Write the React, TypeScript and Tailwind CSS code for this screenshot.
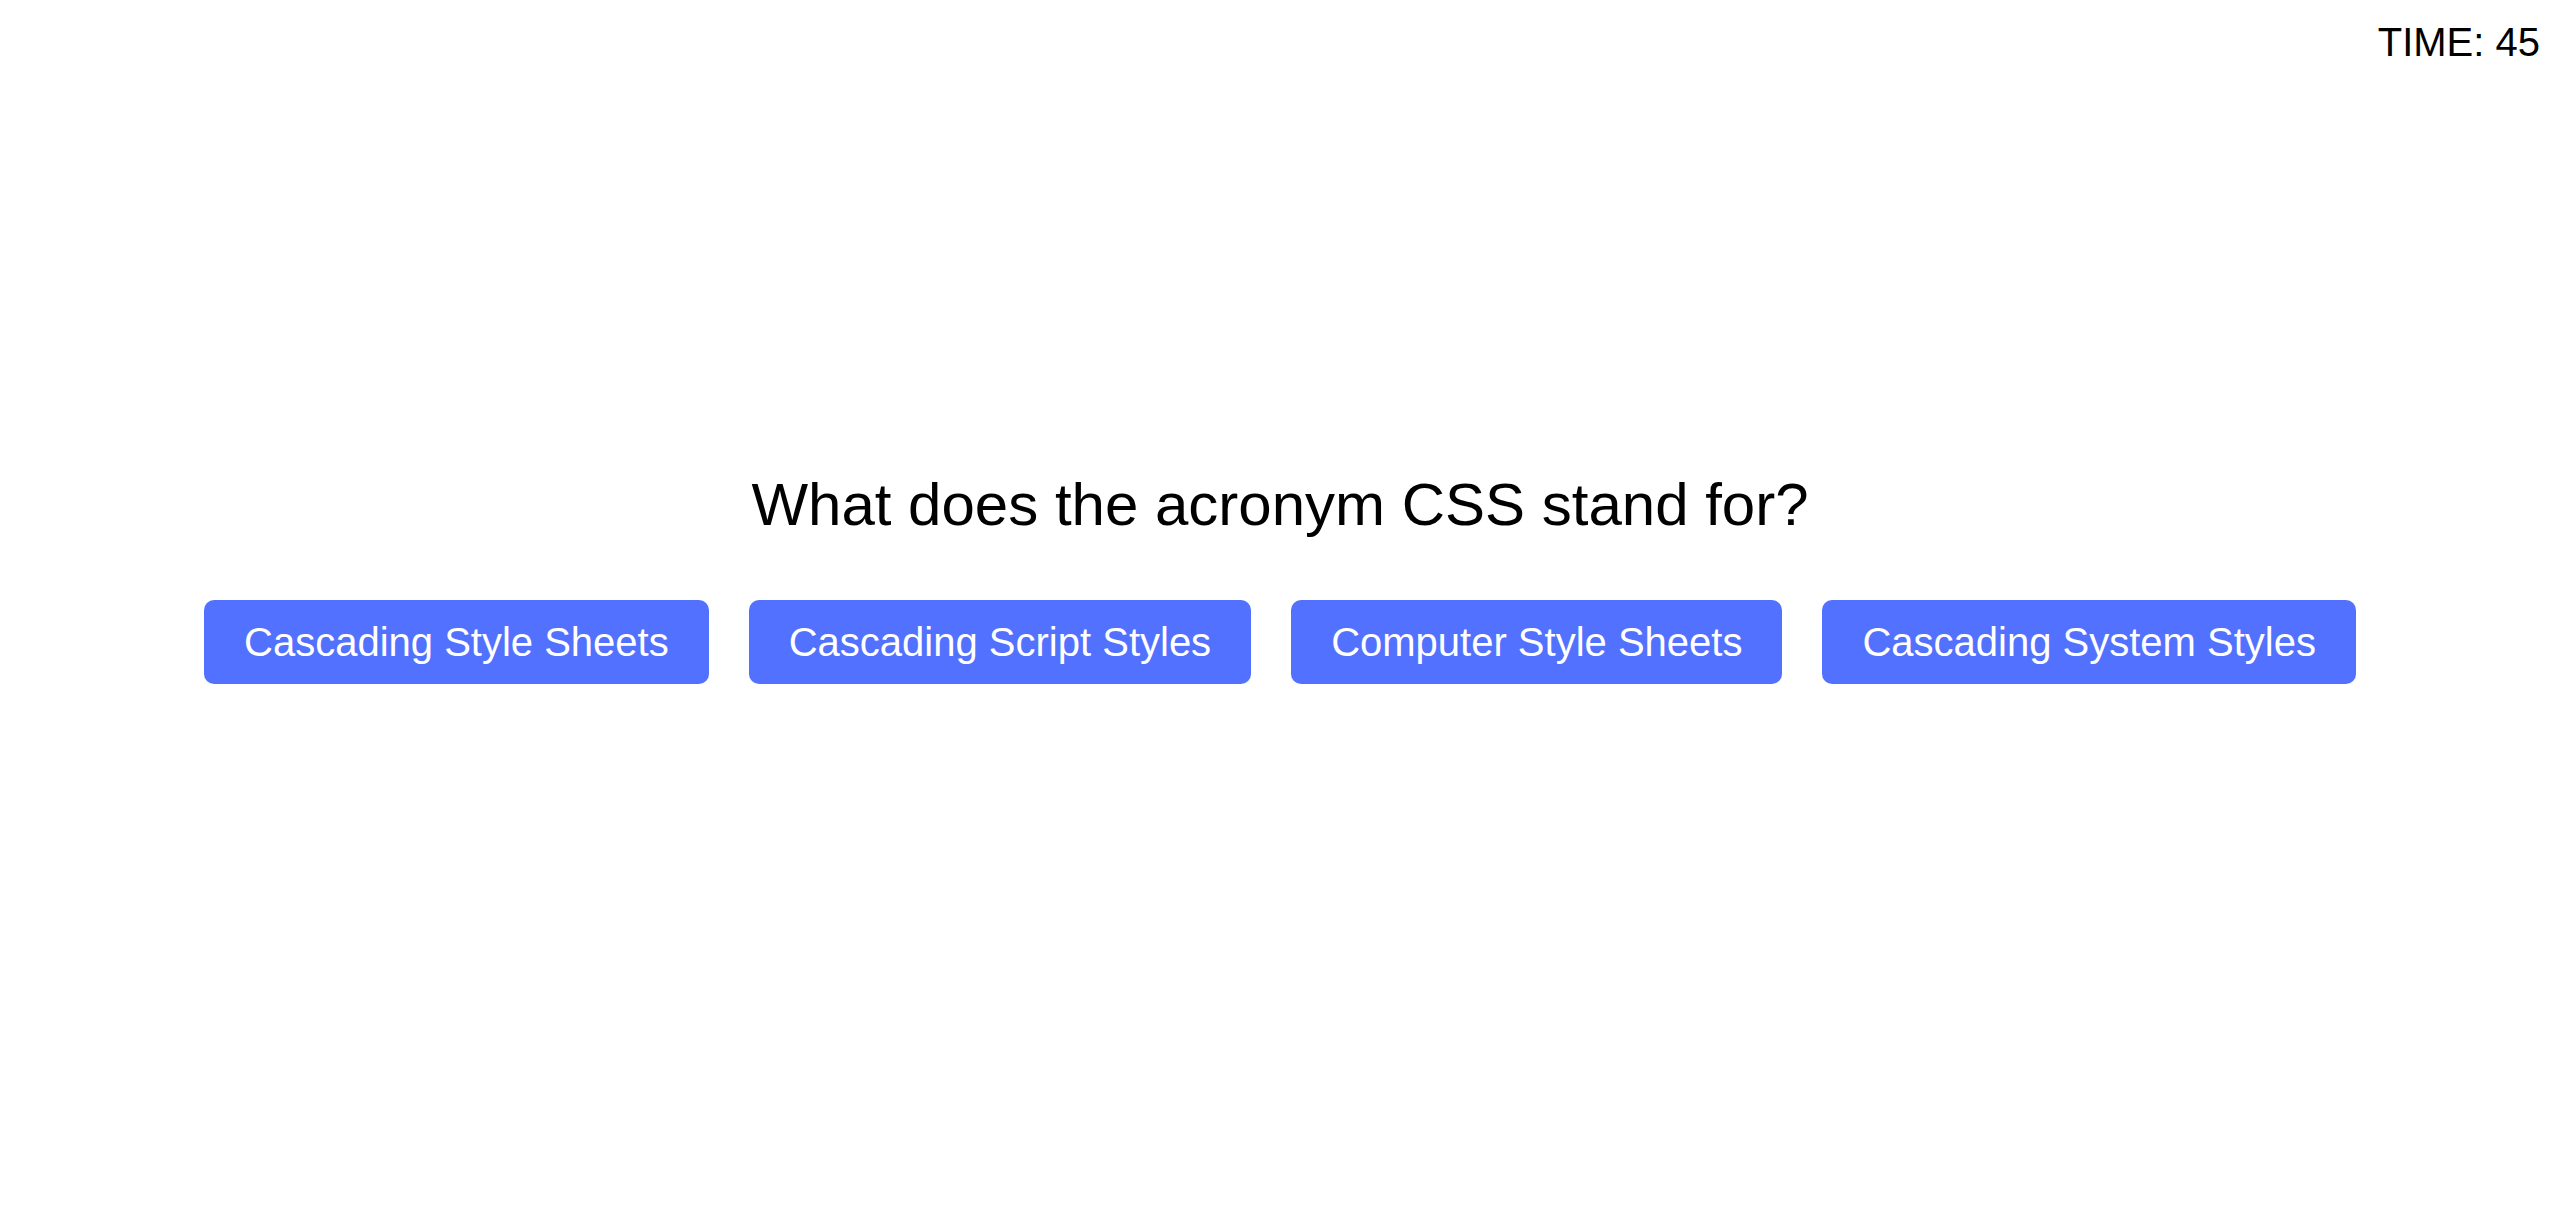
const answers = [
  "Cascading Style Sheets",
  "Cascading Script Styles",
  "Computer Style Sheets",
  "Cascading System Styles",
]

export default function App() {
  return (
    <div className="min-h-screen bg-white text-black font-['Liberation_Sans',Arial,sans-serif]">
      <div className="flex justify-end pt-[19px] pr-[20px]">
        <span className="text-[40px] leading-[46px]">TIME: 45</span>
      </div>

      <div className="flex flex-col items-center pt-[405px]">
        <h1 className="text-[60px] leading-[69px] font-normal">What does the acronym CSS stand for?</h1>

        <div className="mt-[61px] flex gap-[40px]">
          {answers.map((a) => (
            <button
              key={a}
              className="h-[84px] px-[40px] rounded-[10px] bg-[#5371ff] text-white text-[40px] leading-[46px]"
            >
              {a}
            </button>
          ))}
        </div>
      </div>
    </div>
  )
}
